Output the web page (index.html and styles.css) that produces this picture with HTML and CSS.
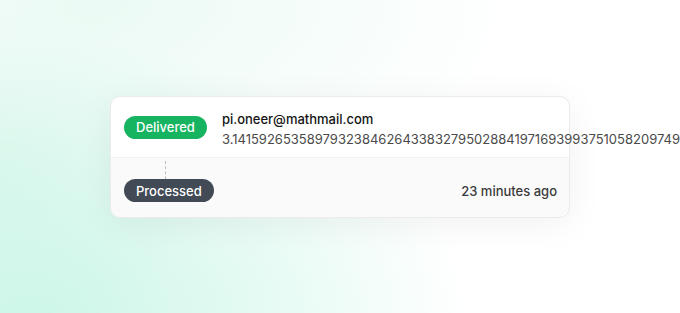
FILE: index.html
```html
<!DOCTYPE html>
<html lang="en">
<head>
    <meta charset="UTF-8">
    <meta name="viewport" content="width=device-width, initial-scale=1.0">
    <title>Message log</title>
    <link rel="stylesheet" href="styles.css">
</head>
<body>
    <div id="main">
        <div class="card">
            <div class="row top">
                <div class="badge green">Delivered</div>
                <div class="info">
                    <div class="email">pi.oneer@mathmail.com</div>
                    <div class="digits">3.14159265358979323846264338327950288419716939937510582097494459230781640628</div>
                </div>
            </div>
            <div class="row bottom">
                <div class="step">
                    <div class="dash"></div>
                    <div class="badge slate">Processed</div>
                </div>
                <div class="time">23 minutes ago</div>
            </div>
        </div>
    </div>
</body>
</html>
```

FILE: styles.css
```css
*{
    margin: 0;
    padding: 0;
    box-sizing: border-box;
    font-family: "Inter", "Liberation Sans", sans-serif;
}
html,body{
    width: 100%;
    height: 100%;
    overflow: hidden;
}
body{
    background:
        radial-gradient(ellipse 440px 280px at 30px 320px, #ccf6e8 0%, rgba(204,246,232,0.6) 45%, rgba(204,246,232,0) 100%),
        radial-gradient(ellipse 420px 230px at 100px 0px, #ebfaf4 0%, rgba(235,250,244,0) 100%),
        radial-gradient(ellipse 200px 200px at 0px 160px, #e2f8ef 0%, rgba(226,248,239,0) 100%),
        #ffffff;
}
#main{
    width: 100%;
    height: 100%;
    padding: 96px 0 0 110px;
}
.card{
    width: 460px;
    background-color: #fafafa;
    border: 1px solid #ebebeb;
    border-radius: 10px;
    box-shadow: 0 6px 36px rgba(0,0,0,0.06);
    overflow: visible;
}
.row{
    display: flex;
    align-items: center;
    padding: 0 12px 0 13px;
}
.top{
    height: 61px;
    background-color: #ffffff;
    border-radius: 10px 10px 0 0;
    border-bottom: 1px solid #f2f2f2;
    gap: 15px;
}
.bottom{
    height: 59px;
    padding-top: 6px;
    justify-content: space-between;
}
.badge{
    height: 23px;
    padding: 0 12px;
    border-radius: 12px;
    color: #ffffff;
    font-size: 13px;
    font-weight: 500;
    display: flex;
    align-items: center;
    position: relative;
}
.green{
    background-color: #16b461;
}
.slate{
    background-color: #414a55;
}
.info{
    white-space: nowrap;
    padding-top: 5px;
}
.email{
    font-size: 13px;
    font-weight: 500;
    color: #141414;
    line-height: 17px;
}
.digits{
    font-size: 13px;
    color: #4a4a4a;
    line-height: 18px;
    margin-top: 2px;
}
.step{
    position: relative;
    height: 100%;
    margin-top: -6px;
    padding-top: 6px;
    display: flex;
    align-items: center;
}
.dash{
    position: absolute;
    left: 41px;
    top: 0;
    bottom: 14px;
    border-left: 1px dashed #bdbdbd;
}
.time{
    font-size: 13px;
    font-weight: 500;
    color: #3a3a3a;
}
```
